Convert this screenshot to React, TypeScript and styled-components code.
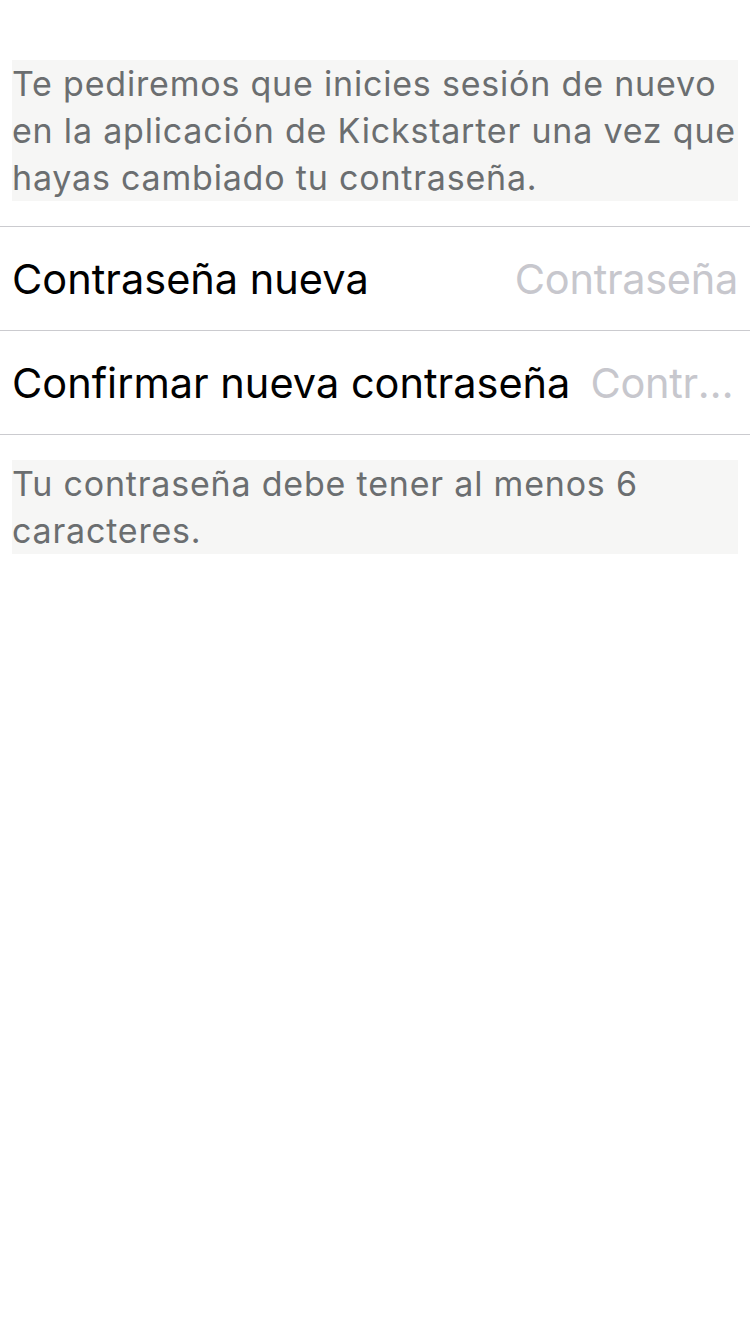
import React from "react";
import styled, { createGlobalStyle } from "styled-components";

const Global = createGlobalStyle`
  html, body { margin: 0; padding: 0; background: #ffffff; }
  body { font-family: Inter, Roboto, "Liberation Sans", sans-serif; -webkit-font-smoothing: antialiased; }
`;

const Page = styled.div`
  width: 750px;
  min-height: 1334px;
  background: #ffffff;
  padding-top: 60px;
  box-sizing: border-box;
  display: flex;
  flex-direction: column;
`;

const Note = styled.p<{ $after?: number }>`
  margin: 0 12px ${(p) => p.$after ?? 0}px 12px;
  background: #f6f6f5;
  color: #6b6e70;
  font-size: 34px;
  line-height: 47px;
  letter-spacing: 0.8px;
`;

const Group = styled.div`
  border-top: 1px solid #cbcbcf;
  margin-bottom: 25px;
`;

const Row = styled.label`
  height: 103px;
  border-bottom: 1px solid #cbcbcf;
  display: flex;
  align-items: center;
  gap: 20px;
  padding: 0 12px;
`;

const Label = styled.span`
  flex: none;
  color: #000000;
  font-size: 41.5px;
  white-space: nowrap;
`;

const Placeholder = styled.span`
  flex: 1;
  min-width: 0;
  text-align: right;
  color: #c7c7cd;
  font-size: 41.5px;
  letter-spacing: -0.3px;
  white-space: nowrap;
  overflow: hidden;
  text-overflow: ellipsis;
`;

export default function App() {
  return (
    <>
      <Global />
      <Page>
        <Note $after={25}>
          Te pediremos que inicies sesión de nuevo en la aplicación de Kickstarter una vez que hayas cambiado tu contraseña.
        </Note>
        <Group>
          <Row>
            <Label>Contraseña nueva</Label>
            <Placeholder>Contraseña</Placeholder>
          </Row>
          <Row>
            <Label>Confirmar nueva contraseña</Label>
            <Placeholder>Contraseña</Placeholder>
          </Row>
        </Group>
        <Note>Tu contraseña debe tener al menos 6 caracteres.</Note>
      </Page>
    </>
  );
}
